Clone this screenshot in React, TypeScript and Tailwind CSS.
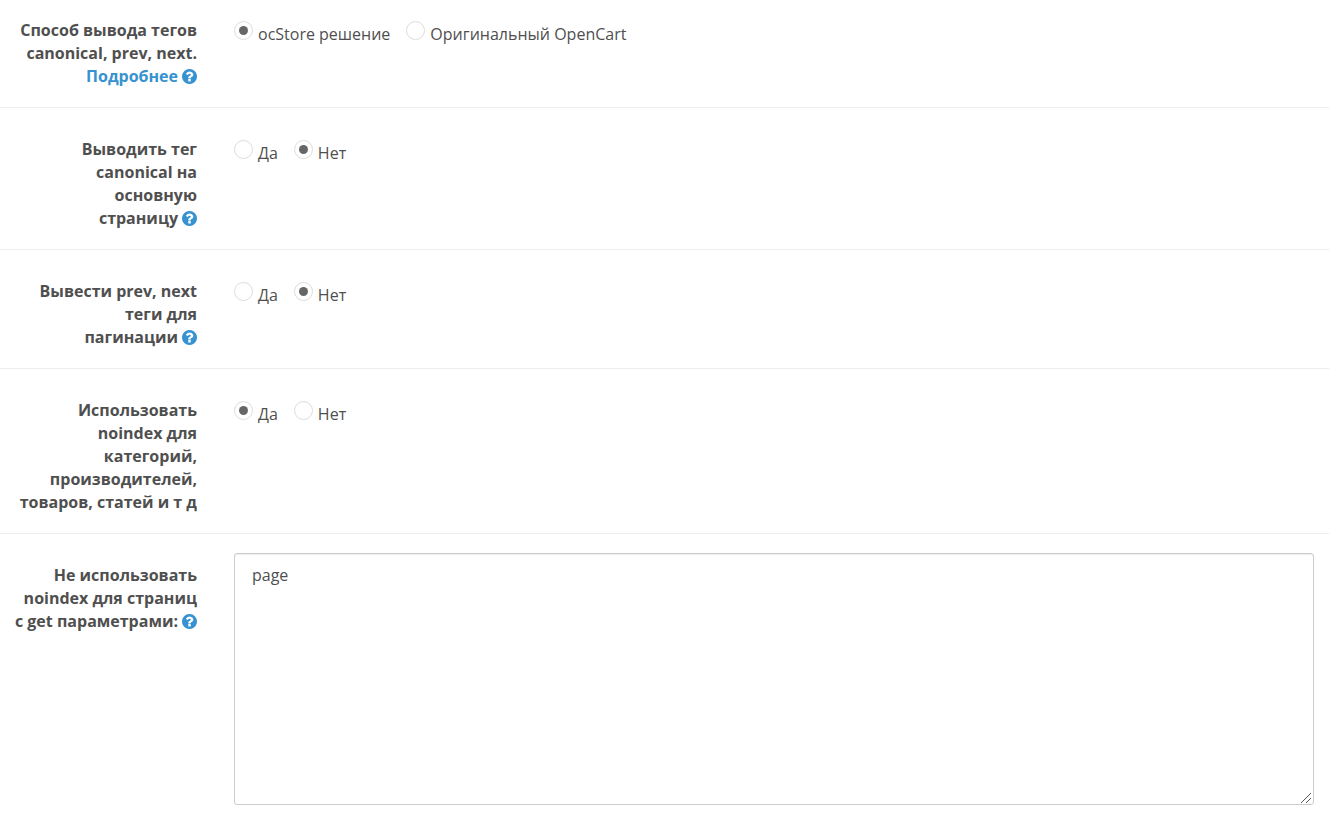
import type { ReactNode } from "react";

function Help({ text }: { text: string }) {
  return (
    <svg role="img" aria-label={text} viewBox="0 0 1536 1536" className="ml-1 inline-block size-[15px] align-[-2px]" fill="#3692d0">
      <path d="M896 1248v-192q0-14-9-23t-23-9h-192q-14 0-23 9t-9 23v192q0 14 9 23t23 9h192q14 0 23-9t9-23zM1152 576q0-88-55.500-163t-138.500-116-170-41q-243 0-371 213-15 24 8 42l132 100q7 6 19 6 16 0 25-12 53-68 86-92 34-24 86-24 48 0 85.500 26t37.500 59q0 38-20 61t-68 45q-63 28-115.500 86.500t-52.500 125.500v36q0 14 9 23t23 9h192q14 0 23-9t9-23q0-19 21.500-49.500t54.500-49.500q32-18 49-28.500t46-35 44.500-48 28-60.500 12.500-81zM1536 768q0 209-103 385.500t-279.500 279.500-385.500 103-385.500-103-279.500-279.500-103-385.500 103-385.500 279.500-279.500 385.500-103 385.500 103 279.500 279.500 103 385.500z" />
    </svg>
  );
}

function Row({ label, id, children }: { label: ReactNode; id: string; children: ReactNode }) {
  return (
    <div className="flex border-b border-[#ededed] py-[19px] first:pt-2 last:border-b-0">
      <div id={id} className="w-[219px] shrink-0 pt-[11px] pr-[22px] pl-[13px] text-right font-bold">
        {label}
      </div>
      <div className="min-w-0 flex-1 px-[15px]">{children}</div>
    </div>
  );
}

function Radios({ name, options, selected }: { name: string; options: string[]; selected: number }) {
  return (
    <div role="radiogroup" aria-labelledby={name} className="flex gap-4 pt-[13px]">
      {options.map((option, i) => (
        <label key={option} className="flex items-start gap-[5px]">
          <input
            type="radio"
            name={name}
            defaultChecked={i === selected}
            className="grid size-[19px] appearance-none place-items-center rounded-full border border-[#dddddd] bg-white before:size-[9px] before:rounded-full checked:before:bg-[#666666]"
          />
          <span className="pt-[2px]">{option}</span>
        </label>
      ))}
    </div>
  );
}

const yesNo = ["Да", "Нет"];

export default function App() {
  return (
    <form className="bg-white font-['Open_Sans',sans-serif] text-[16px] leading-[23px] text-[#4f4f4f]">
      <Row
        id="canonical-mode"
        label={
          <>
            Способ вывода тегов canonical, prev, next.{" "}
            <a href="#more" className="text-[#3692d0]">Подробнее</a>
            <Help text="Справка" />
          </>
        }
      >
        <Radios name="canonical-mode" options={["ocStore решение", "Оригинальный OpenCart"]} selected={0} />
      </Row>
      <Row id="canonical-main" label={<>Выводить тег canonical на основную<br />страницу<Help text="Справка" /></>}>
        <Radios name="canonical-main" options={yesNo} selected={1} />
      </Row>
      <Row id="pagination" label={<>Вывести prev, next теги для<br />пагинации<Help text="Справка" /></>}>
        <Radios name="pagination" options={yesNo} selected={1} />
      </Row>
      <Row id="noindex" label="Использовать noindex для категорий, производителей, товаров, статей и т д">
        <Radios name="noindex" options={yesNo} selected={0} />
      </Row>
      <Row id="get-params" label={<>Не использовать noindex для страниц с&nbsp;get параметрами:<Help text="Справка" /></>}>
        <div className="relative">
          <textarea
            aria-labelledby="get-params"
            defaultValue="page"
            className="block h-[252px] w-full resize-y rounded-[3px] border border-[#cccccc] px-[17px] py-[10px] shadow-[inset_0_1px_1px_rgba(0,0,0,0.075)] outline-none [&::-webkit-resizer]:bg-transparent"
          />
          <svg aria-hidden="true" viewBox="0 0 10 10" className="pointer-events-none absolute right-[3px] bottom-[2px] size-[10px]" stroke="#555555" strokeWidth="1">
            <path d="M0 10L10 0M5 10L10 5" />
          </svg>
        </div>
      </Row>
    </form>
  );
}
